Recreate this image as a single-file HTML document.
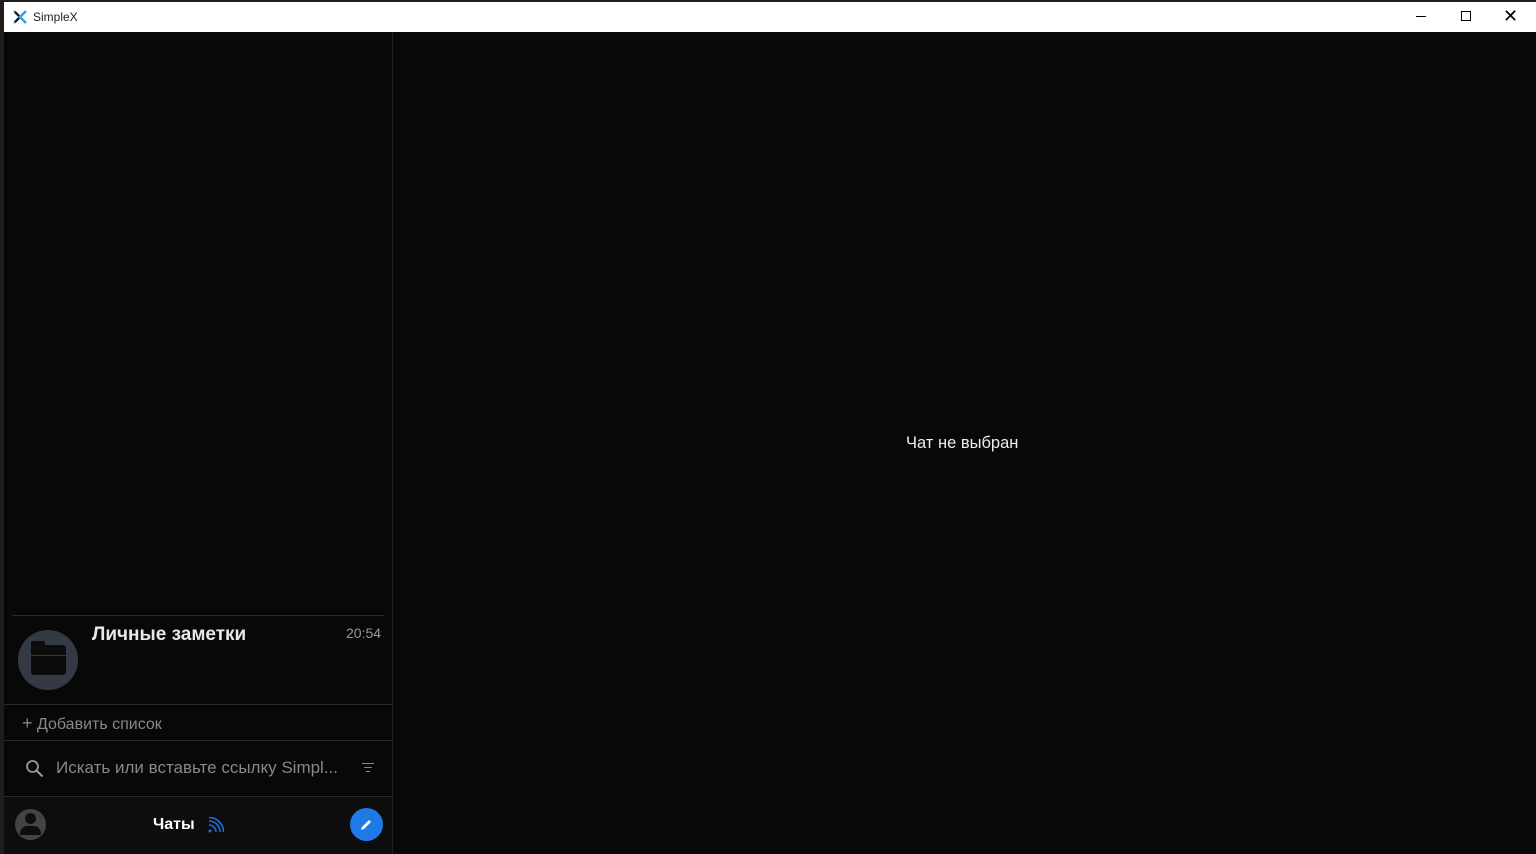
<!DOCTYPE html><html><head><meta charset="utf-8"><style>
body{margin:0;width:1536px;height:854px;background:#1e1e1e;font-family:"Liberation Sans",sans-serif;position:relative;overflow:hidden}
div{position:absolute;box-sizing:border-box}
.t{color:#222;font-size:12px}
</style></head><body>
<div style="left:4px;top:2px;width:1532px;height:30px;background:#fff"></div>
<svg style="position:absolute;left:12px;top:9px" width="16" height="16" viewBox="0 0 16 16"><path d="M2 2l12 12M14 2L2 14" stroke="#3aa0e8" stroke-width="2.5"/><path d="M3 3l4 4M3 13l4-4" stroke="#111" stroke-width="2"/></svg>
<div class="t" style="left:33px;top:10px">SimpleX</div>
<div style="left:1416px;top:16px;width:10px;height:1px;background:#000"></div>
<div style="left:1461px;top:11px;width:10px;height:10px;border:1px solid #000"></div>
<div style="left:1503px;top:6px;font-size:18px;color:#000;font-weight:300">✕</div>
<div style="left:4px;top:32px;width:1532px;height:822px;background:#080808"></div>
<div style="left:392px;top:32px;width:1px;height:822px;background:#222"></div>
<div style="left:906px;top:434px;color:#eee;font-size:16.5px">Чат не выбран</div>
<div style="left:12px;top:615px;width:372px;height:1px;background:#2a2a2a"></div>
<div style="left:18px;top:630px;width:60px;height:60px;border-radius:50%;background:#333a44"></div>
<div style="left:31px;top:645px;width:35px;height:30px;background:#0c0c0c;border-radius:3px"></div>
<div style="left:31px;top:641px;width:14px;height:6px;background:#0c0c0c;border-radius:2px 2px 0 0"></div>
<div style="left:31px;top:655px;width:35px;height:1px;background:#333a44"></div>
<div style="left:92px;top:624px;color:#e8e8e8;font-size:19px;font-weight:bold">Личные заметки</div>
<div style="left:346px;top:625px;color:#999;font-size:14px">20:54</div>
<div style="left:4px;top:704px;width:388px;height:1px;background:#2a2a2a"></div>
<div style="left:22px;top:713px;color:#888;font-size:16px"><span style="font-size:18px">+</span> Добавить список</div>
<div style="left:4px;top:740px;width:388px;height:1px;background:#2a2a2a"></div>
<svg style="position:absolute;left:25px;top:759px" width="20" height="20" viewBox="0 0 20 20"><circle cx="7.5" cy="7.5" r="5.5" fill="none" stroke="#999" stroke-width="1.8"/><path d="M11.5 11.5l6 6" stroke="#999" stroke-width="2"/></svg>
<div style="left:56px;top:758px;color:#888;font-size:17px">Искать или вставьте ссылку Simpl...</div>
<div style="left:362px;top:763px;width:12px;height:1px;background:#888"></div>
<div style="left:364px;top:767px;width:8px;height:1px;background:#888"></div>
<div style="left:366px;top:771px;width:4px;height:1px;background:#888"></div>
<div style="left:4px;top:796px;width:388px;height:58px;background:#0d0d0d;border-top:1px solid #2a2a2a"></div>
<div style="left:15px;top:809px;width:31px;height:31px;border-radius:50%;background:#444"></div>
<div style="left:25px;top:813px;width:11px;height:11px;border-radius:50%;background:#0d0d0d"></div>
<div style="left:20px;top:826px;width:21px;height:9px;border-radius:10px 10px 2px 2px;background:#0d0d0d"></div>
<div style="left:153px;top:816px;color:#fff;font-size:16px;font-weight:bold">Чаты</div>
<svg style="position:absolute;left:208px;top:817px" width="16" height="16" viewBox="0 0 16 16"><circle cx="2" cy="14" r="1.5" fill="#1e6fe0"/><path d="M1 8a7 7 0 0 1 7 7M1 4a11 11 0 0 1 11 11M1 0.5a14.5 14.5 0 0 1 14.5 14.5" fill="none" stroke="#1e6fe0" stroke-width="1.6"/></svg>
<div style="left:350px;top:808px;width:33px;height:33px;border-radius:50%;background:#1d7ae6"></div>
<svg style="position:absolute;left:359px;top:817px" width="15" height="15" viewBox="0 0 15 15"><path d="M2 13l1-3 7-7 2 2-7 7z" fill="#fff"/></svg>
</body></html>
